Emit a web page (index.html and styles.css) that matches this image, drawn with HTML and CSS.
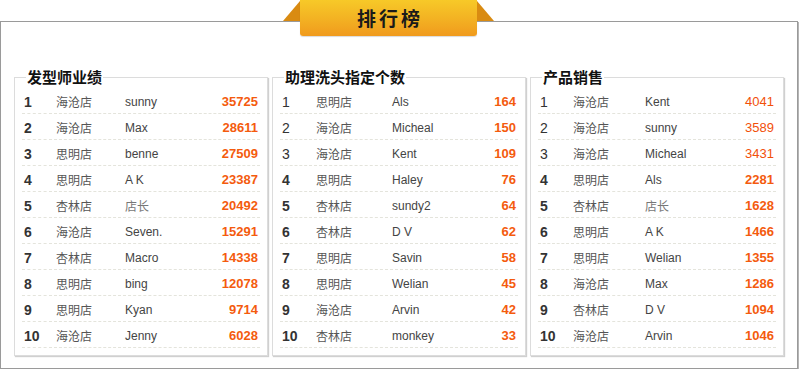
FILE: index.html
```html
<!DOCTYPE html>
<html lang="zh-CN">
<head>
  <meta charset="UTF-8">
  <title>排行榜</title>
  <link rel="stylesheet" href="styles.css">
</head>
<body>

<div class="rank-wrap">
  <!-- 顶部标签 -->
  <div class="ribbon">
    <span class="wing wing-left"></span>
    <div class="tab">排行榜</div>
    <span class="wing wing-right"></span>
  </div>

  <div class="rank-box">

    <!-- 发型师业绩 -->
    <fieldset class="panel">
      <legend>发型师业绩</legend>
      <table class="list list-hair">
        <colgroup><col class="c-rank"><col class="c-store"><col class="c-name"><col></colgroup>
        <tr><td class="no">1</td><td class="store">海沧店</td><td class="name">sunny</td><td class="val">35725</td></tr>
        <tr><td class="no">2</td><td class="store">海沧店</td><td class="name">Max</td><td class="val">28611</td></tr>
        <tr><td class="no">3</td><td class="store">思明店</td><td class="name">benne</td><td class="val">27509</td></tr>
        <tr><td class="no">4</td><td class="store">思明店</td><td class="name">A K</td><td class="val">23387</td></tr>
        <tr><td class="no">5</td><td class="store">杏林店</td><td class="name cn">店长</td><td class="val">20492</td></tr>
        <tr><td class="no">6</td><td class="store">海沧店</td><td class="name">Seven.</td><td class="val">15291</td></tr>
        <tr><td class="no">7</td><td class="store">杏林店</td><td class="name">Macro</td><td class="val">14338</td></tr>
        <tr><td class="no">8</td><td class="store">思明店</td><td class="name">bing</td><td class="val">12078</td></tr>
        <tr><td class="no">9</td><td class="store">思明店</td><td class="name">Kyan</td><td class="val">9714</td></tr>
        <tr><td class="no">10</td><td class="store">海沧店</td><td class="name">Jenny</td><td class="val">6028</td></tr>
      </table>
    </fieldset>

    <!-- 助理洗头指定个数 -->
    <fieldset class="panel">
      <legend>助理洗头指定个数</legend>
      <table class="list list-wash">
        <colgroup><col class="c-rank"><col class="c-store"><col class="c-name"><col></colgroup>
        <tr><td class="no thin">1</td><td class="store">思明店</td><td class="name">Als</td><td class="val">164</td></tr>
        <tr><td class="no thin">2</td><td class="store">海沧店</td><td class="name">Micheal</td><td class="val">150</td></tr>
        <tr><td class="no thin">3</td><td class="store">海沧店</td><td class="name">Kent</td><td class="val">109</td></tr>
        <tr><td class="no">4</td><td class="store">思明店</td><td class="name">Haley</td><td class="val">76</td></tr>
        <tr><td class="no">5</td><td class="store">杏林店</td><td class="name">sundy2</td><td class="val">64</td></tr>
        <tr><td class="no">6</td><td class="store">杏林店</td><td class="name">D V</td><td class="val">62</td></tr>
        <tr><td class="no">7</td><td class="store">思明店</td><td class="name">Savin</td><td class="val">58</td></tr>
        <tr><td class="no">8</td><td class="store">思明店</td><td class="name">Welian</td><td class="val">45</td></tr>
        <tr><td class="no">9</td><td class="store">海沧店</td><td class="name">Arvin</td><td class="val">42</td></tr>
        <tr><td class="no">10</td><td class="store">杏林店</td><td class="name">monkey</td><td class="val">33</td></tr>
      </table>
    </fieldset>

    <!-- 产品销售 -->
    <fieldset class="panel">
      <legend>产品销售</legend>
      <table class="list list-sale">
        <colgroup><col class="c-rank"><col class="c-store"><col class="c-name"><col></colgroup>
        <tr><td class="no thin">1</td><td class="store">海沧店</td><td class="name">Kent</td><td class="val thin">4041</td></tr>
        <tr><td class="no thin">2</td><td class="store">海沧店</td><td class="name">sunny</td><td class="val thin">3589</td></tr>
        <tr><td class="no thin">3</td><td class="store">海沧店</td><td class="name">Micheal</td><td class="val thin">3431</td></tr>
        <tr><td class="no">4</td><td class="store">思明店</td><td class="name">Als</td><td class="val">2281</td></tr>
        <tr><td class="no">5</td><td class="store">杏林店</td><td class="name cn">店长</td><td class="val">1628</td></tr>
        <tr><td class="no">6</td><td class="store">思明店</td><td class="name">A K</td><td class="val">1466</td></tr>
        <tr><td class="no">7</td><td class="store">思明店</td><td class="name">Welian</td><td class="val">1355</td></tr>
        <tr><td class="no">8</td><td class="store">海沧店</td><td class="name">Max</td><td class="val">1286</td></tr>
        <tr><td class="no">9</td><td class="store">杏林店</td><td class="name">D V</td><td class="val">1094</td></tr>
        <tr><td class="no">10</td><td class="store">海沧店</td><td class="name">Arvin</td><td class="val">1046</td></tr>
      </table>
    </fieldset>

  </div>
</div>

</body>
</html>
```

FILE: styles.css
```css
body {
  margin: 0;
  background: #fff;
  font-family: "Liberation Sans", Arial, "Noto Sans CJK SC", sans-serif;
  color: #333;
}

.rank-wrap {
  position: relative;
  width: 798px;
  padding-top: 21px;     /* space for the ribbon */
}

/* ribbon tab on top of the box */
.ribbon {
  position: absolute;
  top: 0;
  left: 283px;
  display: flex;
  align-items: flex-start;
  z-index: 2;
}

.tab {
  width: 177px;
  height: 36px;
  line-height: 35px;
  text-align: center;
  font-family: "Noto Sans CJK SC", sans-serif;
  font-size: 19px;
  font-weight: bold;
  letter-spacing: 3px;
  text-indent: 3px;
  color: #1a1a1a;
  background: linear-gradient(#f7c928, #f3b323 50%, #f09a1d);
  border-radius: 0 0 3px 3px;
  box-shadow: 0 1px 1px rgba(0, 0, 0, 0.15);
}

.wing {
  width: 0;
  height: 0;
  margin-top: 1px;
  border-bottom: 20px solid #d98b12;
}

.wing-left {
  border-left: 17px solid transparent;
}

.wing-right {
  border-right: 17px solid transparent;
}

/* main box */
.rank-box {
  display: grid;
  grid-template-columns: repeat(3, 1fr);
  gap: 4px;
  padding: 44px 13px 12px;
  border: 1px solid #9a9a9a;
  box-shadow: 1px 1px 0 #b5b5b5;
}

.panel {
  margin: 0;
  min-width: 0;
  padding: 0 5px 7px;
  border: 1px solid #dcdcdc;
  box-shadow: 1px 1px 1px #d0d0d0;
}

.panel legend {
  margin-left: 6px;
  padding: 0 1px;
  line-height: 22px;
  font-family: "Noto Sans CJK SC", sans-serif;
  font-size: 15px;
  font-weight: bold;
  color: #111;
}

.list {
  width: 100%;
  table-layout: fixed;
  border-collapse: separate;
  border-spacing: 2px 0;
}

.list td {
  padding: 4px 2px 1px;
  line-height: 20px;
  border-bottom: 1px dashed #e4e4dc;
  white-space: nowrap;
}

.list-hair .c-rank { width: 30px; }
.list-hair .c-store { width: 67px; }
.list-hair .c-name { width: 69px; }

.list-wash .c-rank { width: 32px; }
.list-wash .c-store { width: 74px; }
.list-wash .c-name { width: 68px; }

.list-sale .c-rank { width: 31px; }
.list-sale .c-store { width: 70px; }
.list-sale .c-name { width: 68px; }

.no {
  font-size: 14px;
  font-weight: bold;
  color: #333;
}

.store {
  font-family: "Noto Sans CJK SC", sans-serif;
  font-size: 12px;
  color: #555;
}

.name {
  font-size: 12px;
  color: #444;
}

.name.cn {
  font-family: "Noto Sans CJK SC", sans-serif;
  color: #777;
}

.val {
  text-align: right;
  font-size: 13px;
  font-weight: bold;
  color: #f45b0e;
}

.thin {
  font-weight: normal;
}

.val.thin {
  color: #f2500a;
}
```
